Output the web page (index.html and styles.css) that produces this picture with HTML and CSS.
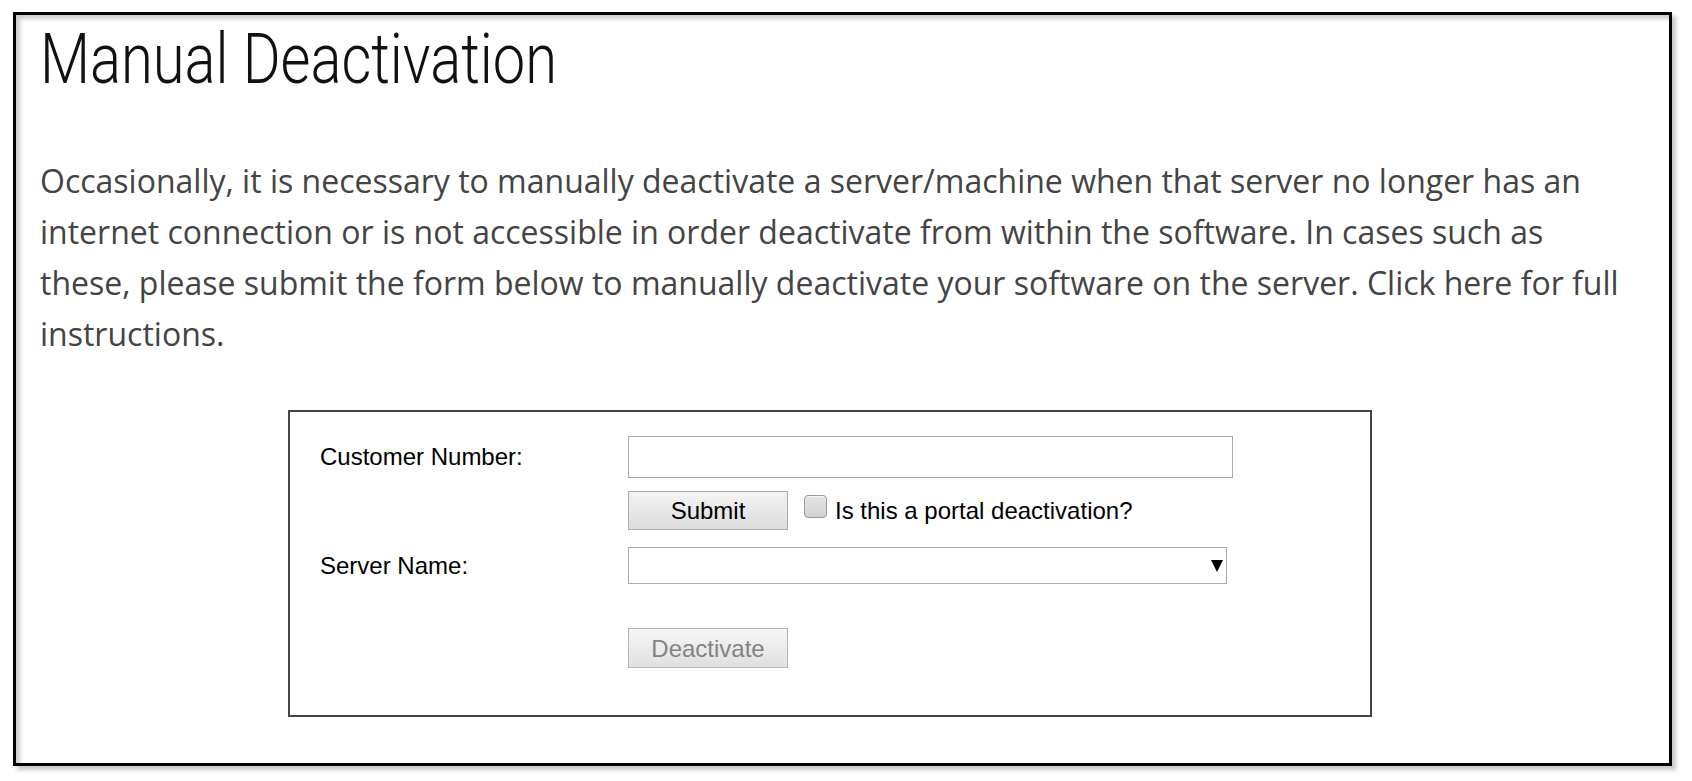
FILE: index.html
```html
<!DOCTYPE html>
<html lang="en">
<head>
<meta charset="utf-8">
<title>Manual Deactivation</title>
<link rel="stylesheet" href="styles.css">
</head>
<body>
<div class="frame">
  <h1 class="title"><span class="title-text">Manual Deactivation</span></h1>
  <p class="intro">Occasionally, it is necessary to manually deactivate a server/machine when that server no longer has an internet connection or is not accessible in order deactivate from within the software. In cases such as these, please submit the form below to manually deactivate your software on the server. Click here for full instructions.</p>
  <div class="form-box">
    <div class="form-grid">
      <label class="field-label" for="cust">Customer Number:</label>
      <input class="text-input" id="cust" type="text">
      <div class="spacer"></div>
      <div class="submit-row">
        <button class="btn" type="button">Submit</button>
        <label class="check-label"><span class="check-box"></span>Is this a portal deactivation?</label>
      </div>
      <label class="field-label">Server Name:</label>
      <div class="select-box"><svg class="select-arrow" width="12" height="12" viewBox="0 0 12 12"><polygon points="0,0 12,0 6,12" fill="#000"/></svg></div>
      <div class="spacer"></div>
      <button class="btn btn-disabled" type="button" disabled>Deactivate</button>
    </div>
  </div>
</div>
</body>
</html>
```
FILE: styles.css
```css
html, body {
  margin: 0;
  padding: 0;
  background: #ffffff;
}

body {
  padding: 12px 0 0 13px;
  height: 781px;
  box-sizing: border-box;
  overflow: hidden;
}

.frame {
  box-sizing: border-box;
  width: 1659px;
  height: 754px;
  border: 3px solid #000;
  padding: 0 44px 0 24px;
  background: #fff;
  box-shadow: 4px 4px 4px rgba(0, 0, 0, 0.22), inset 4px 4px 4px rgba(0, 0, 0, 0.2);
}

.title {
  margin: 9px 0 0 0;
  font-family: Roboto, sans-serif;
  font-weight: 300;
  font-size: 70px;
  line-height: 70px;
  color: #111;
  white-space: nowrap;
}

.title-text {
  display: inline-block;
  transform: scaleX(0.826);
  transform-origin: 0 50%;
}

.intro {
  margin: 61px 0 0 0;
  font-family: "Open Sans", sans-serif;
  font-size: 32px;
  line-height: 51px;
  color: #444;
}

.form-box {
  box-sizing: border-box;
  width: 1084px;
  margin: 51px 0 0 248px;
  border: 2px solid #444;
  padding: 24px 0 47px 30px;
}

.form-grid {
  display: grid;
  grid-template-columns: 308px auto;
  align-items: center;
  justify-items: start;
}

.form-grid > :nth-child(3),
.form-grid > :nth-child(4) {
  margin-top: 13px;
}

.form-grid > :nth-child(5),
.form-grid > :nth-child(6) {
  margin-top: 17px;
}

.form-grid > :nth-child(7),
.form-grid > :nth-child(8) {
  margin-top: 44px;
}

.spacer {
  height: 1px;
}

.field-label {
  font-family: "Liberation Sans", Arial, sans-serif;
  font-size: 24px;
  line-height: 28px;
  color: #000;
}

.text-input {
  box-sizing: border-box;
  width: 605px;
  height: 42px;
  margin: 0;
  padding: 0 6px;
  border: 1px solid #a9a9a9;
  border-radius: 0;
  background: #fff;
  font-family: "Liberation Sans", Arial, sans-serif;
  font-size: 24px;
  outline: none;
}

.submit-row {
  display: flex;
  align-items: center;
  height: 39px;
}

.btn {
  box-sizing: border-box;
  width: 160px;
  height: 39px;
  margin: 0;
  padding: 0;
  border: 1px solid #acacac;
  border-radius: 0;
  background: linear-gradient(#f4f4f4, #dcdcdc);
  font-family: "Liberation Sans", Arial, sans-serif;
  font-size: 24px;
  line-height: 37px;
  color: #000;
}

.btn-disabled {
  height: 40px;
  color: #838383;
  border-color: #b4b4b4;
  background: linear-gradient(#f6f6f6, #e0e0e0);
}

.check-label {
  display: flex;
  align-items: center;
  margin-left: 16px;
  font-family: "Liberation Sans", Arial, sans-serif;
  font-size: 24px;
  color: #000;
}

.check-box {
  box-sizing: border-box;
  width: 23px;
  height: 23px;
  margin: -8px 8px 0 0;
  border: 1px solid #9a9a9a;
  border-radius: 4px;
  background: linear-gradient(#e4e4e4, #d2d2d2);
  box-shadow: inset 0 1px 1px rgba(255, 255, 255, 0.7);
}

.select-box {
  box-sizing: border-box;
  width: 599px;
  height: 37px;
  border: 1px solid #a9a9a9;
  background: #fff;
  display: flex;
  align-items: center;
  justify-content: flex-end;
  padding-right: 3px;
}

.select-arrow {
  display: block;
}
```
